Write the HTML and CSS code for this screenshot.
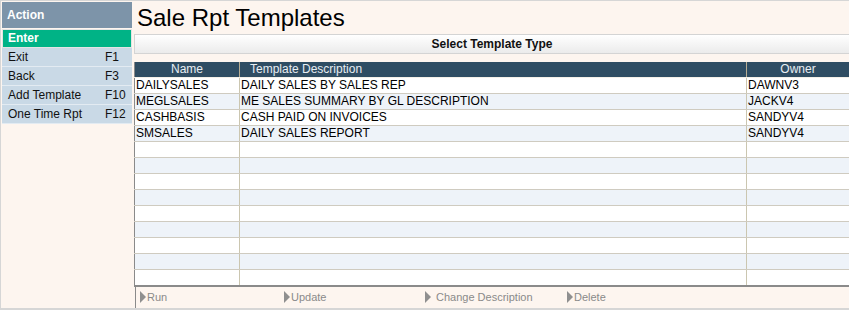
FILE: index.html
```html
<html lang="en">
<head>
  <meta charset="UTF-8">
  <title>Sale Rpt Templates</title>
  <link rel="stylesheet" href="styles.css">
</head>
<body>

<div class="frame">
  <div class="sidebar">
    <div class="action-head">Action</div>
    <div class="enter">Enter</div>
    <div class="menu-row"><span>Exit</span><span>F1</span></div>
    <div class="menu-row"><span>Back</span><span>F3</span></div>
    <div class="menu-row"><span>Add Template</span><span>F10</span></div>
    <div class="menu-row"><span>One Time Rpt</span><span>F12</span></div>
  </div>

  <div class="main">
    <h1>Sale Rpt Templates</h1>
    <div class="select-bar">Select Template Type</div>

    <table class="grid">
      <thead>
        <tr>
          <th class="col-name">Name</th>
          <th class="col-desc">Template Description</th>
          <th class="col-owner">Owner</th>
        </tr>
      </thead>
      <tbody id="rows"></tbody>
    </table>

    <div class="actions">
      <span class="act act-run">Run</span>
      <span class="act act-update">Update</span>
      <span class="act act-change">Change Description</span>
      <span class="act act-delete">Delete</span>
    </div>
  </div>
</div>

<script>
  const templates = [
    { name: "DAILYSALES", desc: "DAILY SALES BY SALES REP", owner: "DAWNV3" },
    { name: "MEGLSALES", desc: "ME SALES SUMMARY BY GL DESCRIPTION", owner: "JACKV4" },
    { name: "CASHBASIS", desc: "CASH PAID ON INVOICES", owner: "SANDYV4" },
    { name: "SMSALES", desc: "DAILY SALES REPORT", owner: "SANDYV4" }
  ];

  const body = document.getElementById("rows");
  for (let i = 0; i < 13; i++) {
    const t = templates[i] || { name: "", desc: "", owner: "" };
    const tr = document.createElement("tr");
    tr.innerHTML = `<td>${t.name}</td><td>${t.desc}</td><td>${t.owner}</td>`;
    body.appendChild(tr);
  }
</script>

</body>
</html>
```

FILE: styles.css
```css
body {
  margin: 0;
  padding: 0;
  font-family: "Liberation Sans", Arial, sans-serif;
  background-color: #fdf5ef;
}

.frame {
  display: flex;
  width: 849px;
  height: 310px;
  box-sizing: border-box;
  border-top: 1px solid #d6d6d6;
  border-left: 1px solid #d6d6d6;
  border-bottom: 2px solid #d6d6d6;
  overflow: hidden;
}

.sidebar {
  width: 130px;
  padding-top: 1px;
  padding-left: 1px;
  flex-shrink: 0;
}

.action-head {
  height: 26px;
  line-height: 26px;
  background-color: #7d94a9;
  color: white;
  font-size: 12px;
  font-weight: bold;
  padding-left: 5px;
}

.enter {
  margin-top: 1px;
  height: 17px;
  line-height: 17px;
  background-color: #00b386;
  border: 1px solid #e4e4e4;
  color: white;
  font-size: 12px;
  font-weight: bold;
  padding-left: 5px;
}

.menu-row {
  display: flex;
  justify-content: space-between;
  height: 18px;
  line-height: 18px;
  background-color: #c9d9e6;
  border-bottom: 1px solid #e3ebf2;
  font-size: 12px;
  color: #111;
  padding: 0 3px 0 6px;
}

.menu-row span:last-child {
  width: 24px;
}

.main {
  flex: 1;
  padding-left: 2px;
}

h1 {
  margin: 0;
  height: 33px;
  line-height: 33px;
  font-size: 24px;
  font-weight: normal;
  padding-left: 3px;
  color: #000;
}

.select-bar {
  height: 18px;
  line-height: 18px;
  border: 1px solid #d4d4d4;
  border-right: none;
  background: linear-gradient(#ffffff, #ebebeb);
  text-align: center;
  font-size: 12px;
  font-weight: bold;
  color: #111;
}

.grid {
  margin-top: 8px;
  width: 100%;
  border-collapse: collapse;
  border-left: 1px solid #8a8a8a;
  border-bottom: 2px solid #8a8a8a;
  font-size: 12px;
}

.grid th {
  height: 15px;
  padding: 0;
  background-color: #2f4d63;
  color: #e8eef3;
  font-weight: normal;
  font-size: 12px;
  line-height: 15px;
  border-bottom: 1px solid #f4f0e8;
}

.col-name {
  width: 104px;
  text-align: center;
}

.col-desc {
  text-align: left;
  padding-left: 10px !important;
}

.col-owner {
  width: 102px;
  text-align: center;
}

.col-desc,
.col-owner {
  border-left: 1px solid #b8ae94;
}

.grid td {
  height: 16px;
  padding: 0 0 0 1px;
  line-height: 15px;
  border-bottom: 1px solid #cfcbc0;
  color: #000;
  white-space: nowrap;
}

.grid td + td {
  border-left: 1px solid #cbc6b0;
}

.grid tbody tr:nth-child(odd) {
  background-color: #ffffff;
}

.grid tbody tr:nth-child(even) {
  background-color: #eef3f9;
}

.actions {
  display: flex;
  height: 21px;
  line-height: 21px;
  margin-left: 1px;
  border-left: 1px solid #8a8a8a;
  border-bottom: 2px solid #8a8a8a;
  font-size: 11px;
  color: #8a8a8a;
}

.act {
  display: inline-flex;
  align-items: center;
}

.act::before {
  content: "";
  width: 0;
  height: 0;
  border-top: 6px solid transparent;
  border-bottom: 6px solid transparent;
  border-left: 6px solid #8f8f8f;
  margin-right: 1px;
}

.act-run {
  width: 144px;
  padding-left: 4px;
}

.act-update {
  width: 141px;
}

.act-change {
  width: 142px;
}

.act-change::before {
  margin-right: 5px;
}
```
